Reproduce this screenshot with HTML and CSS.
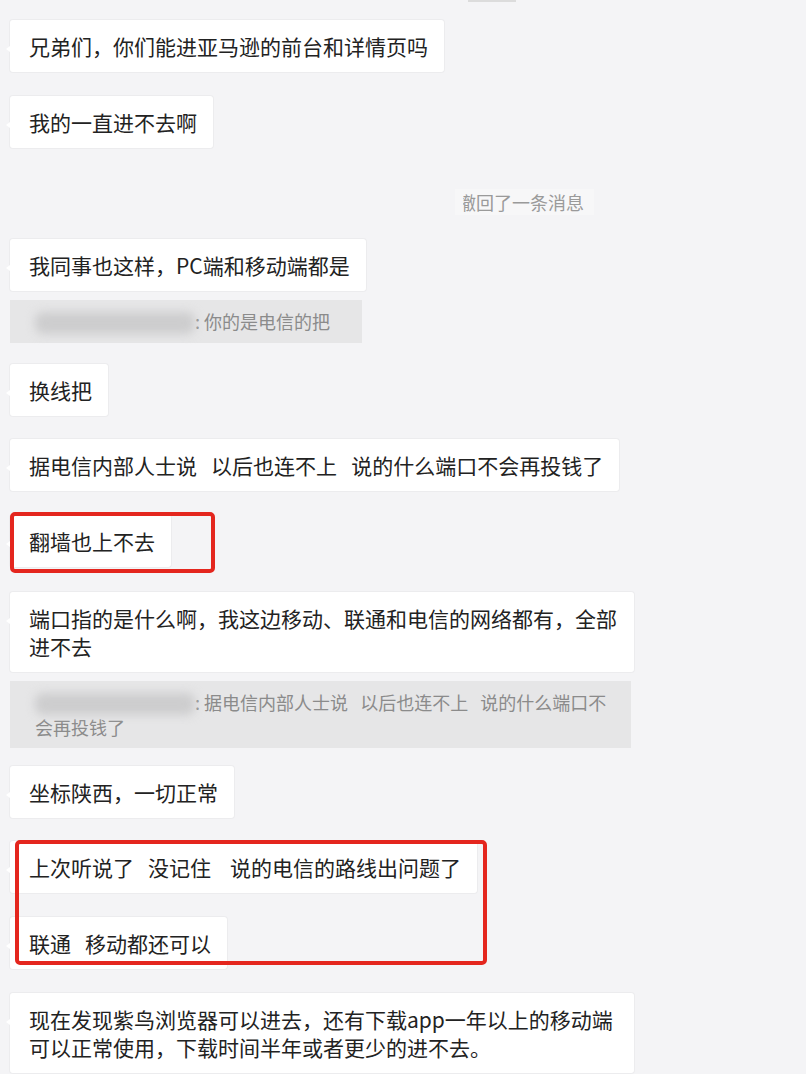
FILE: index.html
```html
<!DOCTYPE html>
<html lang="zh-CN">
<head>
<meta charset="utf-8">
<title>聊天记录</title>
<link rel="stylesheet" href="styles.css">
</head>
<body>
<div class="chat">
  <div class="topbar"></div>
  <div class="bubble mt18">兄弟们，你们能进亚马逊的前台和详情页吗</div>
  <div class="bubble mt24">我的一直进不去啊</div>
  <div class="recall">撤回了一条消息</div>
  <div class="bubble mt24">我同事也这样，PC端和移动端都是</div>
  <div class="quote mt9"><span class="blurname"></span>: 你的是电信的把</div>
  <div class="bubble mt21">换线把</div>
  <div class="bubble mt23">据电信内部人士说   以后也连不上   说的什么端口不会再投钱了</div>
  <div class="mark mark-one mt24">
    <div class="bubble">翻墙也上不去</div>
  </div>
  <div class="bubble mt25">端口指的是什么啊，我这边移动、联通和电信的网络都有，全部进不去</div>
  <div class="quote quote-wide mt9"><span class="blurname"></span>: 据电信内部人士说   以后也连不上   说的什么端口不会再投钱了</div>
  <div class="bubble mt18">坐标陕西，一切正常</div>
  <div class="mark mark-two mt23">
    <div class="bubble">上次听说了   没记住    说的电信的路线出问题了</div>
    <div class="bubble mt24">联通   移动都还可以</div>
  </div>
  <div class="bubble mt24">现在发现紫鸟浏览器可以进去，还有下载app一年以上的移动端可以正常使用，下载时间半年或者更少的进不去。</div>
</div>
</body>
</html>
```
FILE: styles.css
```css
html, body {
  margin: 0;
  padding: 0;
  background: #f4f4f6;
}

.chat {
  display: flex;
  flex-direction: column;
  align-items: flex-start;
  padding: 0 0 20px 10px;
  font-family: "Noto Sans CJK SC", "Noto Sans", sans-serif;
}

.topbar {
  width: 48px;
  height: 2px;
  margin-left: 458px;
  background: #dcdcdc;
}

.bubble {
  position: relative;
  box-sizing: border-box;
  max-width: 624px;
  padding: 12px 16px 12px 19px;
  background: #ffffff;
  border-radius: 3px;
  box-shadow: 0 0 0 1px #ececee;
  font-size: 21px;
  line-height: 28px;
  color: #222222;
  white-space: pre-wrap;
}

.bubble::before {
  content: "";
  position: absolute;
  left: -4px;
  top: 26px;
  border-top: 3px solid transparent;
  border-bottom: 3px solid transparent;
  border-right: 4px solid #ffffff;
}

.quote {
  box-sizing: border-box;
  max-width: 621px;
  padding: 9px 32px 9px 25px;
  background: #e6e6e7;
  font-size: 18px;
  line-height: 24px;
  color: #8b8b8b;
  white-space: pre-wrap;
}

.quote-wide {
  width: 621px;
  padding-right: 20px;
}

.blurname {
  display: inline-block;
  width: 160px;
  height: 22px;
  vertical-align: -5px;
  background: #cdcdce;
  border-radius: 8px;
  filter: blur(5px);
}

.recall {
  position: relative;
  margin-top: 41px;
  margin-left: 445px;
  padding: 0 10px 0 3px;
  height: 26px;
  font-size: 18px;
  line-height: 26px;
  color: #9a9a9a;
  background: #f7f7f8;
}

.recall::after {
  content: "";
  position: absolute;
  left: 0;
  top: 0;
  width: 8px;
  height: 26px;
  background: #f7f7f8;
}

.mark {
  position: relative;
  display: flex;
  flex-direction: column;
  align-items: flex-start;
}

.mark::after {
  content: "";
  position: absolute;
  box-sizing: border-box;
  border: 4px solid #e4261e;
  border-radius: 5px;
}

.mark-one::after {
  left: 0;
  top: -3px;
  width: 205px;
  height: 61px;
}

.mark-two::after {
  left: 5px;
  top: -1px;
  width: 472px;
  height: 125px;
}

.mt9 { margin-top: 9px; }
.mt18 { margin-top: 18px; }
.mt21 { margin-top: 21px; }
.mt23 { margin-top: 23px; }
.mt24 { margin-top: 24px; }
.mt25 { margin-top: 25px; }
```
